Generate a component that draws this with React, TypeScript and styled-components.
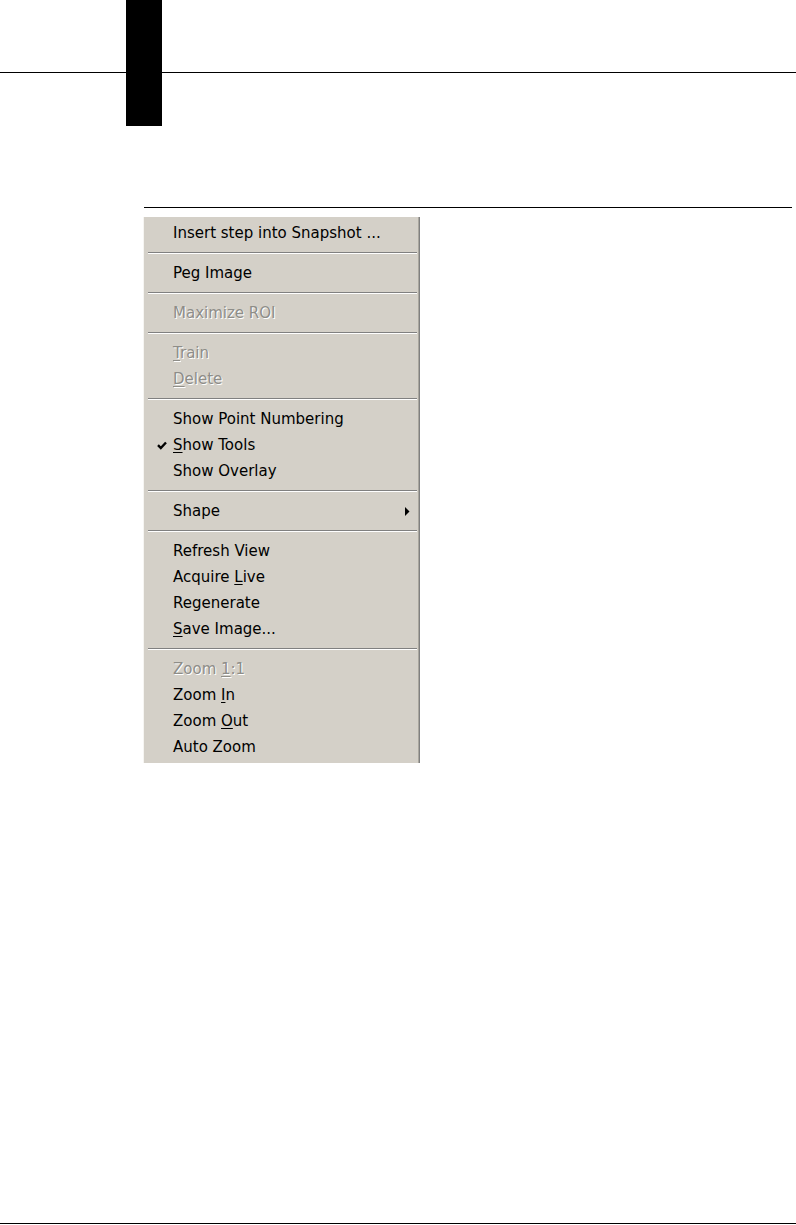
import React from "react";
import styled, { createGlobalStyle } from "styled-components";

const Global = createGlobalStyle`
  html, body { margin: 0; padding: 0; background: #ffffff; }
  body { font-family: "DejaVu Sans", "Liberation Sans", sans-serif; }
`;

const Page = styled.div`
  width: 796px;
  min-height: 1225px;
  display: flex;
  flex-direction: column;
  box-sizing: border-box;
`;

const Header = styled.div`
  display: flex;
  height: 126px;
`;

const HeaderRule = styled.div<{ $w?: number }>`
  ${(p) => (p.$w ? `width: ${p.$w}px;` : "flex: 1;")}
  height: 72px;
  border-bottom: 1px solid #000;
`;

const Tab = styled.div`
  width: 36px;
  height: 126px;
  background: #000;
`;

const SectionRule = styled.div`
  margin: 81px 4px 0 144px;
  height: 0;
  border-top: 1px solid #000;
`;

const Menu = styled.div`
  margin: 9px 0 0 143px;
  width: 277px;
  box-sizing: border-box;
  background: #d4d0c8;
  border-left: 1px solid #f6f5f2;
  border-right: 1px solid #808080;
  box-shadow: inset -1px 0 0 #aaa79f;
  padding: 3px 0 3px 0;
  font-size: 15px;
  color: #000;
`;

const Item = styled.div<{ $disabled?: boolean }>`
  display: flex;
  align-items: center;
  height: 26px;
  line-height: 26px;
  white-space: nowrap;
  color: ${(p) => (p.$disabled ? "#8e8d88" : "#000")};
  text-shadow: ${(p) => (p.$disabled ? "1px 1px 0 #ffffff" : "none")};
  u {
    text-decoration-thickness: 1px;
    text-underline-offset: 2px;
  }
`;

const Gutter = styled.span`
  width: 29px;
  flex: none;
  display: flex;
  align-items: center;
  padding-left: 13px;
  box-sizing: border-box;
`;

const Label = styled.span`
  flex: 1;
`;

const Arrow = styled.span`
  width: 12px;
  padding-right: 9px;
  display: flex;
  align-items: center;
  justify-content: flex-end;
`;

const Separator = styled.div`
  padding: 6px 2px 6px 4px;
  &::after {
    content: "";
    display: block;
    border-top: 1px solid #808080;
    border-bottom: 1px solid #ffffff;
  }
`;

const BottomRule = styled.div`
  margin-top: auto;
  margin-bottom: 1px;
  border-top: 1px solid #000;
`;

const Check = () => (
  <svg width="10" height="9" viewBox="0 0 10 9">
    <path d="M1 4.2 L3.8 7 L9 1.5" fill="none" stroke="#000" strokeWidth="2.4" />
  </svg>
);

const SubArrow = () => (
  <svg width="5" height="9" viewBox="0 0 5 9">
    <polygon points="0,0 4.5,4.5 0,9" fill="#000" />
  </svg>
);

type Entry =
  | { sep: true }
  | {
      sep?: false;
      label: React.ReactNode;
      disabled?: boolean;
      checked?: boolean;
      submenu?: boolean;
    };

const entries: Entry[] = [
  { label: "Insert step into Snapshot ..." },
  { sep: true },
  { label: "Peg Image" },
  { sep: true },
  { label: "Maximize ROI", disabled: true },
  { sep: true },
  { label: <><u>T</u>rain</>, disabled: true },
  { label: <><u>D</u>elete</>, disabled: true },
  { sep: true },
  { label: "Show Point Numbering" },
  { label: <><u>S</u>how Tools</>, checked: true },
  { label: "Show Overlay" },
  { sep: true },
  { label: "Shape", submenu: true },
  { sep: true },
  { label: "Refresh View" },
  { label: <>Acquire <u>L</u>ive</> },
  { label: "Regenerate" },
  { label: <><u>S</u>ave Image...</> },
  { sep: true },
  { label: <>Zoom <u>1</u>:1</>, disabled: true },
  { label: <>Zoom <u>I</u>n</> },
  { label: <>Zoom <u>O</u>ut</> },
  { label: "Auto Zoom" },
];

export default function App() {
  return (
    <>
      <Global />
      <Page>
        <Header>
          <HeaderRule $w={126} />
          <Tab />
          <HeaderRule />
        </Header>
        <SectionRule />
        <Menu>
          {entries.map((e, i) =>
            e.sep ? (
              <Separator key={i} />
            ) : (
              <Item key={i} $disabled={e.disabled}>
                <Gutter>{e.checked ? <Check /> : null}</Gutter>
                <Label>{e.label}</Label>
                <Arrow>{e.submenu ? <SubArrow /> : null}</Arrow>
              </Item>
            )
          )}
        </Menu>
        <BottomRule />
      </Page>
    </>
  );
}
